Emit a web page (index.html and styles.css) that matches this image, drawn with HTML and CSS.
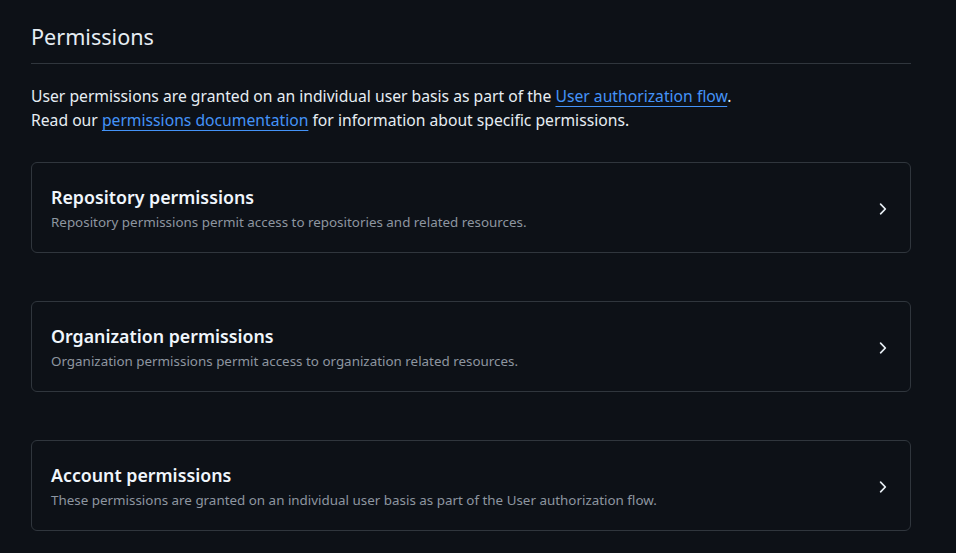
FILE: index.html
```html
<!DOCTYPE html>
<html lang="en">
<head>
<meta charset="utf-8">
<title>Permissions</title>
<link rel="stylesheet" href="styles.css">
</head>
<body>
<main class="page">
  <h2 class="title">Permissions</h2>
  <p class="intro">User permissions are granted on an individual user basis as part of the <a href="#">User authorization flow</a>.<br>Read our <a href="#">permissions documentation</a> for information about specific permissions.</p>
  <div class="cards">
    <div class="card">
      <div class="card-text">
        <h3 class="card-title">Repository permissions</h3>
        <p class="card-desc">Repository permissions permit access to repositories and related resources.</p>
      </div>
      <svg class="chev" viewBox="0 0 16 16" width="18" height="18"><path d="M6.22 3.22a.75.75 0 0 1 1.06 0l4.25 4.25a.75.75 0 0 1 0 1.06l-4.25 4.25a.751.751 0 0 1-1.042-.018.751.751 0 0 1-.018-1.042L9.94 8 6.22 4.28a.75.75 0 0 1 0-1.06Z"/></svg>
    </div>
    <div class="card">
      <div class="card-text">
        <h3 class="card-title">Organization permissions</h3>
        <p class="card-desc">Organization permissions permit access to organization related resources.</p>
      </div>
      <svg class="chev" viewBox="0 0 16 16" width="18" height="18"><path d="M6.22 3.22a.75.75 0 0 1 1.06 0l4.25 4.25a.75.75 0 0 1 0 1.06l-4.25 4.25a.751.751 0 0 1-1.042-.018.751.751 0 0 1-.018-1.042L9.94 8 6.22 4.28a.75.75 0 0 1 0-1.06Z"/></svg>
    </div>
    <div class="card">
      <div class="card-text">
        <h3 class="card-title">Account permissions</h3>
        <p class="card-desc">These permissions are granted on an individual user basis as part of the User authorization flow.</p>
      </div>
      <svg class="chev" viewBox="0 0 16 16" width="18" height="18"><path d="M6.22 3.22a.75.75 0 0 1 1.06 0l4.25 4.25a.75.75 0 0 1 0 1.06l-4.25 4.25a.751.751 0 0 1-1.042-.018.751.751 0 0 1-.018-1.042L9.94 8 6.22 4.28a.75.75 0 0 1 0-1.06Z"/></svg>
    </div>
  </div>
</main>
</body>
</html>
```

FILE: styles.css
```css
html, body {
  margin: 0;
  padding: 0;
  background: #0d1117;
  color: #e6edf3;
  font-family: "Noto Sans", "Liberation Sans", sans-serif;
}
.page {
  width: 880px;
  padding: 20px 0 0 31px;
}
.title {
  margin: 0;
  padding-bottom: 10px;
  font-size: 21.6px;
  font-weight: 400;
  line-height: 33px;
  border-bottom: 1px solid #30363d;
}
.intro {
  margin: 20px 0 0;
  font-size: 15.7px;
  line-height: 24px;
}
.intro a {
  color: #4493f8;
  text-decoration: underline;
  text-underline-offset: 4px;
}
.cards {
  margin-top: 30px;
  display: flex;
  flex-direction: column;
  gap: 48px;
}
.card {
  display: flex;
  align-items: center;
  justify-content: space-between;
  border: 1px solid #30363d;
  border-radius: 6px;
  padding: 22px 19px 20px 19px;
}
.card-title {
  margin: 0;
  font-size: 17.8px;
  font-weight: 600;
  line-height: 24px;
  color: #f0f6fc;
}
.card-desc {
  margin: 3px 0 0;
  font-size: 13.4px;
  line-height: 20px;
  color: #8d96a0;
}
.chev {
  fill: #e6edf3;
  flex: none;
}
```
